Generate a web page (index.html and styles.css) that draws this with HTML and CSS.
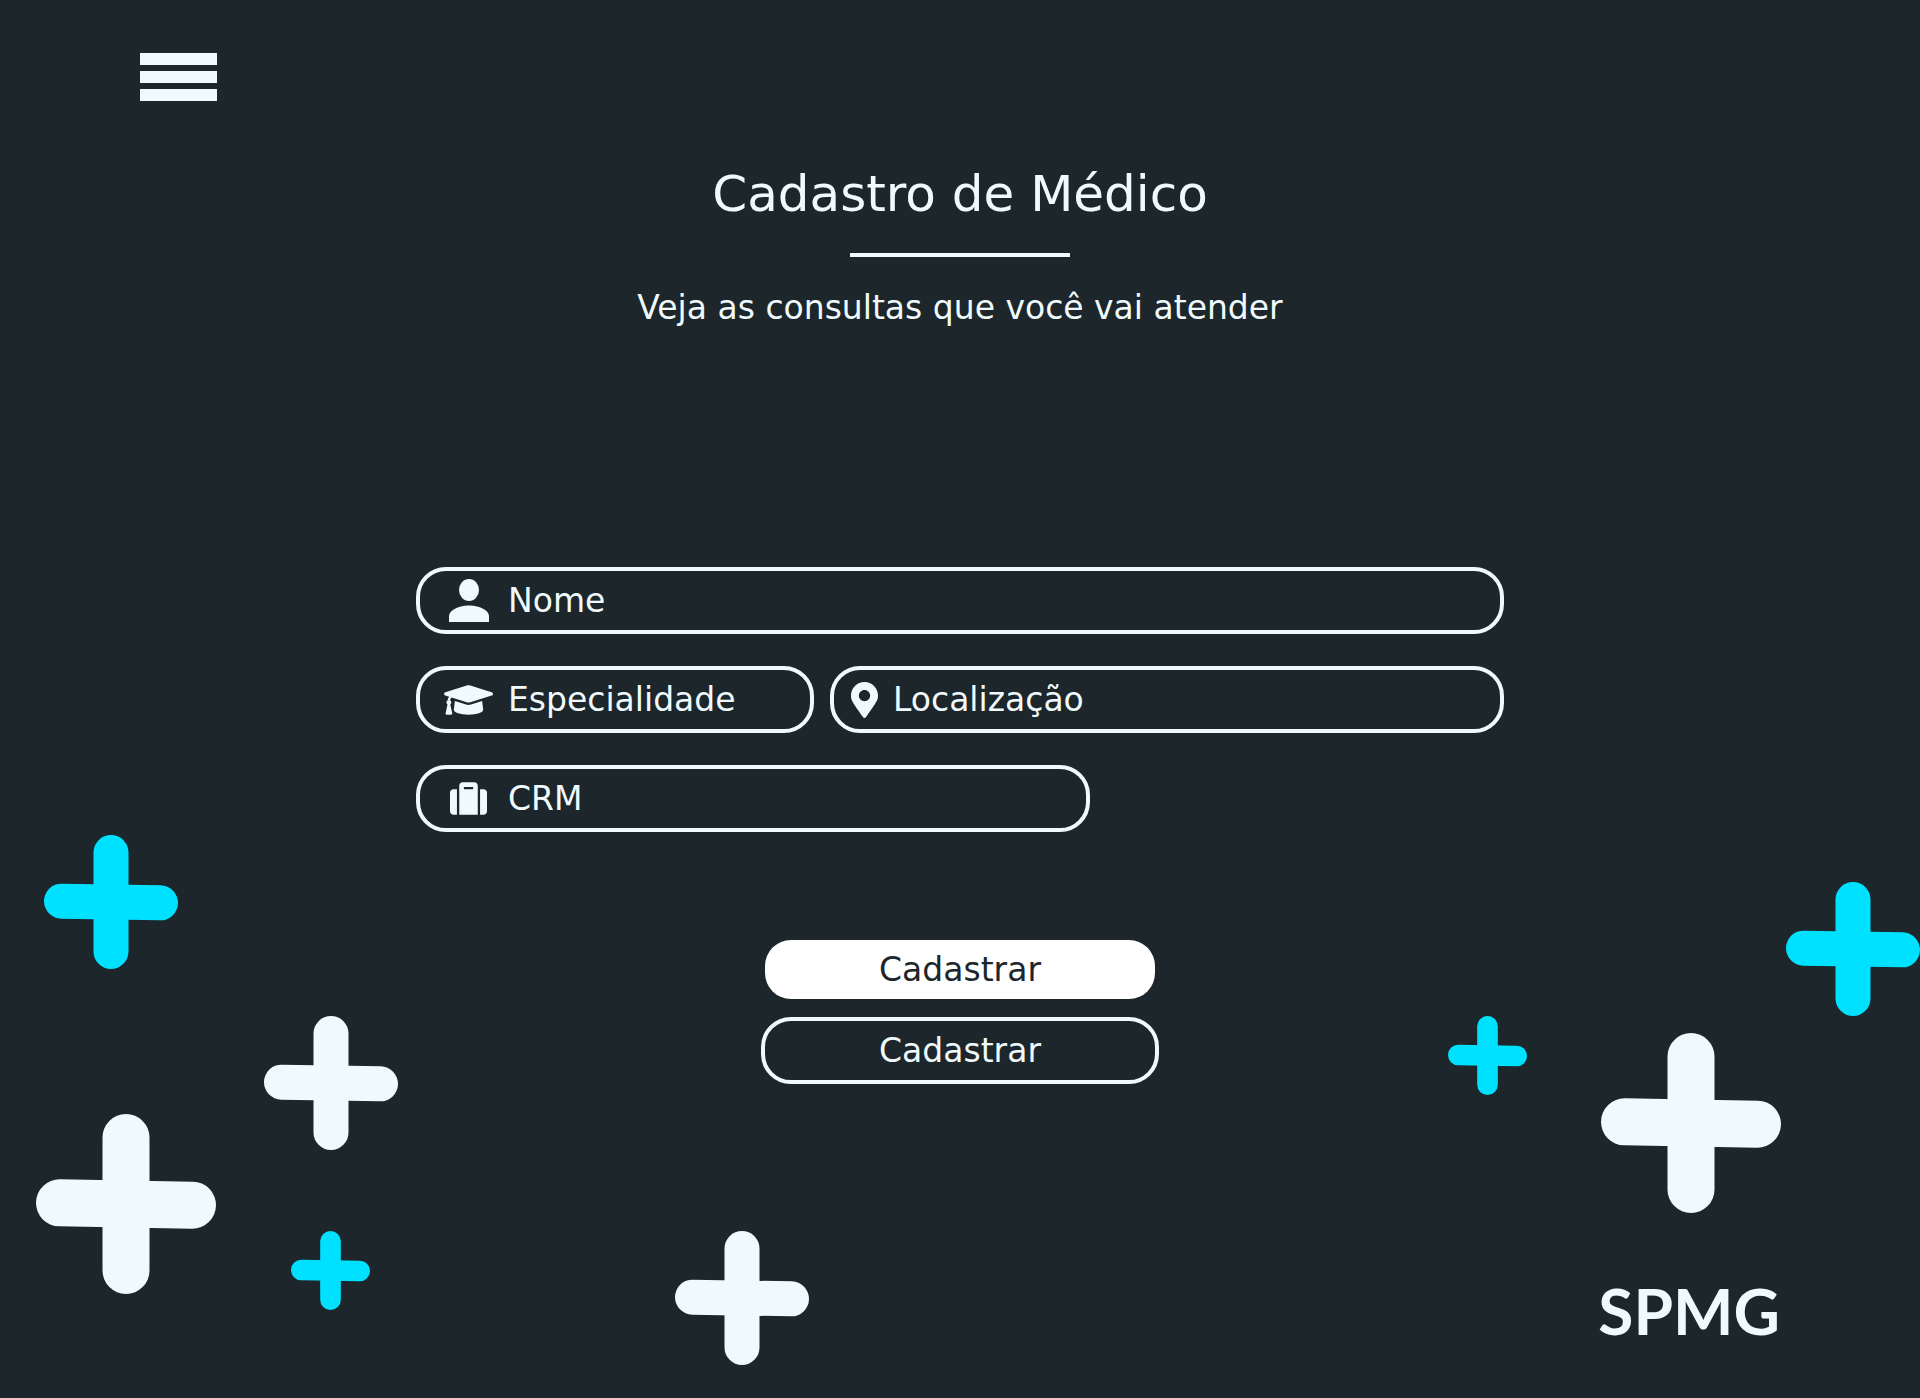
FILE: index.html
```html
<!DOCTYPE html>
<html lang="pt-BR">
<head>
  <meta charset="utf-8">
  <meta name="viewport" content="width=device-width, initial-scale=1">
  <title>Cadastro de Médico</title>
  <link rel="stylesheet" href="styles.css">
</head>
<body class="page">
  <svg class="sprite" aria-hidden="true">
    <symbol id="cross" viewBox="0 0 134 134">
      <rect x="49.5" y="0" width="35" height="134" rx="17.5"/>
      <rect x="0" y="49.5" width="134" height="35" rx="17.5" transform="rotate(1 67 67)"/>
    </symbol>
  </svg>

  <div class="crosses" aria-hidden="true">
    <svg class="cross cross-cyan cross-medium cross-a"><use href="#cross"/></svg>
    <svg class="cross cross-medium cross-b"><use href="#cross"/></svg>
    <svg class="cross cross-large cross-c"><use href="#cross"/></svg>
    <svg class="cross cross-cyan cross-small cross-d"><use href="#cross"/></svg>
    <svg class="cross cross-medium cross-e"><use href="#cross"/></svg>
    <svg class="cross cross-cyan cross-small cross-f"><use href="#cross"/></svg>
    <svg class="cross cross-large cross-g"><use href="#cross"/></svg>
    <svg class="cross cross-cyan cross-medium cross-h"><use href="#cross"/></svg>
  </div>

  <header class="topbar">
    <button class="menu" type="button" aria-label="Menu">
      <span class="menu-bar"></span>
      <span class="menu-bar"></span>
      <span class="menu-bar"></span>
    </button>
  </header>

  <main class="content">
    <h1 class="title">Cadastro de Médico</h1>
    <hr class="rule">
    <p class="subtitle">Veja as consultas que você vai atender</p>

    <form class="form">
      <div class="row">
        <label class="field">
          <span class="icon-box">
            <svg class="icon-user" viewBox="0 0 40 43" aria-hidden="true"><ellipse cx="20" cy="11" rx="10" ry="11"/><path d="M0 43V37.500C0 30 12 26.500 20 26.500S40 30 40 37.500V43Z"/></svg>
          </span>
          <input class="input" type="text" name="nome" placeholder="Nome" aria-label="Nome">
        </label>
      </div>
      <div class="row row-narrow-wide">
        <label class="field">
          <span class="icon-box">
            <svg class="icon-cap" viewBox="0 0 640 512" aria-hidden="true"><path d="M622.34 153.2L343.4 67.5c-15.2-4.67-31.6-4.67-46.79 0L17.66 153.2c-23.54 7.23-23.54 38.36 0 45.59l48.63 14.94c-10.67 13.19-17.23 29.28-17.88 46.9C38.78 266.15 32 276.11 32 288c0 10.78 5.68 19.85 13.86 25.65L20.33 428.53C18.11 438.52 25.71 448 35.94 448h56.11c10.24 0 17.84-9.48 15.62-19.47L82.14 313.65C90.32 307.85 96 298.78 96 288c0-11.57-6.47-21.25-15.66-26.87.76-15.02 8.44-28.3 20.69-36.72L296.6 284.5c9.06 2.78 26.44 6.25 46.79 0l278.95-85.7c23.55-7.24 23.55-38.36 0-45.6zM352.79 315.09c-28.53 8.76-52.84 3.92-65.59 0l-145.02-44.55L128 384c0 35.35 85.96 64 192 64s192-28.65 192-64l-14.18-113.47-145.03 44.56z"/></svg>
          </span>
          <input class="input" type="text" name="especialidade" placeholder="Especialidade" aria-label="Especialidade">
        </label>
        <label class="field field-location">
          <svg class="icon-pin" viewBox="0 0 384 512" aria-hidden="true"><path d="M172.268 501.67C26.97 291.031 0 269.413 0 192 0 85.961 85.961 0 192 0s192 85.961 192 192c0 77.413-26.97 99.031-172.268 309.67-9.535 13.774-29.93 13.773-39.464 0zM192 272c44.183 0 80-35.817 80-80s-35.817-80-80-80-80 35.817-80 80 35.817 80 80 80z"/></svg>
          <input class="input" type="text" name="localizacao" placeholder="Localização" aria-label="Localização">
        </label>
      </div>
      <div class="row row-wide-narrow">
        <label class="field">
          <span class="icon-box">
            <svg class="icon-case" viewBox="0 0 512 512" aria-hidden="true"><path d="M128 480h256V80c0-26.5-21.5-48-48-48H176c-26.5 0-48 21.5-48 48v400zm64-384h128v32H192V96zm320 80v256c0 26.5-21.5 48-48 48h-48V128h48c26.5 0 48 21.5 48 48zM96 480H48c-26.5 0-48-21.5-48-48V176c0-26.5 21.5-48 48-48h48v352z"/></svg>
          </span>
          <input class="input" type="text" name="crm" placeholder="CRM" aria-label="CRM">
        </label>
      </div>
      <div class="actions">
        <button class="button button-filled" type="submit">Cadastrar</button>
        <button class="button button-outline" type="button">Cadastrar</button>
      </div>
    </form>
  </main>

  <footer class="footer">
    <span class="logo">SPMG</span>
  </footer>
</body>
</html>
```
FILE: styles.css
```css
:root {
  --dark: #1c262b;
  --light: #f0fafc;
  --cyan: #00e1ff;
}

* {
  box-sizing: border-box;
}

.page {
  position: relative;
  display: flex;
  flex-direction: column;
  min-height: 100vh;
  margin: 0;
  overflow-x: hidden;
  background: var(--dark);
  color: var(--light);
  font-family: "DejaVu Sans", sans-serif;
  font-size: 33px;
  line-height: 40px;
}

.sprite {
  position: absolute;
  width: 0;
  height: 0;
}

/* Scattered decoration behind the content */
.crosses {
  position: absolute;
  inset: 0;
  overflow: hidden;
  pointer-events: none;
}

.cross {
  position: absolute;
  fill: var(--light);
}

.cross-cyan { fill: var(--cyan); }
.cross-small { width: 79px; height: 79px; }
.cross-medium { width: 134px; height: 134px; }
.cross-large { width: 180px; height: 180px; }

.cross-a { left: 44px; top: 835px; }
.cross-b { left: 264px; top: 1016px; }
.cross-c { left: 36px; top: 1114px; }
.cross-d { left: 291px; top: 1231px; }
.cross-e { left: 675px; top: 1231px; }
.cross-f { right: 393px; top: 1016px; }
.cross-g { right: 139px; top: 1033px; }
.cross-h { right: 0; top: 882px; }

.topbar,
.content,
.footer {
  position: relative;
}

.topbar {
  display: flex;
  padding: 53px 140px 0;
}

.menu {
  display: flex;
  flex-direction: column;
  gap: 6px;
  width: 77px;
  padding: 0;
  border: 0;
  background: none;
  cursor: pointer;
}

.menu-bar {
  height: 12px;
  background: var(--light);
}

.content {
  display: flex;
  flex-direction: column;
  align-items: center;
  padding: 63px 24px 0;
}

.title {
  margin: 0;
  font-size: 50px;
  font-weight: 400;
  line-height: 60px;
}

.rule {
  width: 220px;
  height: 4px;
  margin: 29px 0 31px;
  border: 0;
  background: var(--light);
}

.subtitle {
  margin: 0;
}

.form {
  display: flex;
  flex-direction: column;
  gap: 32px;
  width: 100%;
  max-width: 1088px;
  margin-top: 239px;
}

.row {
  display: grid;
  gap: 16px;
}

.row-narrow-wide { grid-template-columns: 398fr 674fr; }
.row-wide-narrow { grid-template-columns: 674fr 398fr; }

.field {
  display: flex;
  align-items: center;
  gap: 15px;
  min-width: 0;
  height: 67px;
  padding: 0 24px;
  border: 4px solid var(--light);
  border-radius: 30px;
}

.field-location {
  padding-left: 17px;
}

.icon-box {
  display: flex;
  flex: none;
  justify-content: center;
  width: 49px;
}

.field svg {
  flex: none;
  fill: var(--light);
}

.icon-user { width: 40px; height: 43px; }
.icon-cap { width: 49px; height: 40px; }
.icon-case { width: 37px; height: 37px; }
.icon-pin { width: 27px; height: 36px; }

.input {
  flex: 1;
  min-width: 0;
  height: 40px;
  padding: 0;
  border: 0;
  outline: 0;
  background: none;
  color: inherit;
  font: inherit;
}

.input::placeholder {
  color: inherit;
  opacity: 1;
}

.actions {
  display: flex;
  flex-direction: column;
  align-items: center;
  gap: 18px;
  margin-top: 76px;
}

.button {
  font: inherit;
  cursor: pointer;
}

.button-filled {
  width: 390px;
  height: 59px;
  border: 0;
  border-radius: 26px;
  background: #fff;
  color: var(--dark);
}

.button-outline {
  width: 398px;
  height: 67px;
  border: 4px solid var(--light);
  border-radius: 30px;
  background: none;
  color: var(--light);
}

.footer {
  display: flex;
  justify-content: flex-end;
  margin-top: auto;
  padding: 0 140px 47px;
}

.logo {
  font-family: Lato, sans-serif;
  font-size: 64px;
  font-weight: 700;
  line-height: 80px;
}
```
